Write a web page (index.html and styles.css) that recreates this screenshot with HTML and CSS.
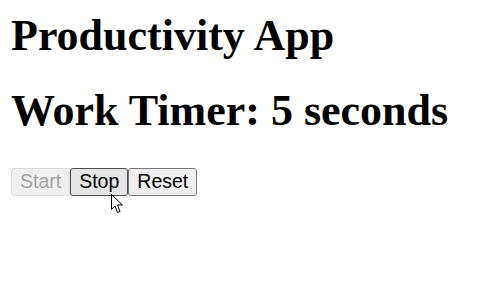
FILE: index.html
```html
<!DOCTYPE html>
<html lang="en">
<head>
    <meta charset="UTF-8">
    <title>Productivity App</title>
    <link rel="stylesheet" href="styles.css">
</head>
<body>

<h1>Productivity App</h1>
<h1 id="timer">Work Timer: 5 seconds</h1>

<div class="controls">
    <button id="start" disabled>Start</button><button id="stop" class="pressed">Stop</button><button id="reset">Reset</button>
</div>

<div class="cursor">
    <svg width="14" height="22" viewBox="0 0 14 22">
        <polygon points="1.5,1.5 1.5,16.5 5,13 7.5,19.5 10,18.5 7.5,12 12.5,12" fill="white" stroke="black" stroke-width="1"/>
    </svg>
</div>

</body>
</html>
```

FILE: styles.css
```css
body {
    margin: 11px;
    font-family: 'Liberation Serif', 'Times New Roman', serif;
    color: #000;
    background-color: #fff;
}

h1 {
    font-size: 44px;
    font-weight: bold;
    margin: 0;
    line-height: 1.15;
}

h1 + h1 {
    margin-top: 24px;
}

.controls {
    margin-top: 32px;
    display: flex;
    align-items: flex-start;
}

button {
    font-family: 'Liberation Sans', Arial, sans-serif;
    font-size: 19.5px;
    padding: 1px 8px 2px;
    height: 28px;
    background-color: #efefef;
    border: 1px solid #767676;
    border-radius: 3px;
    color: #000;
}

button:disabled {
    color: #a3a3a3;
    border-color: #d9d9d9;
    background-color: #f0f0f0;
}

button.pressed {
    background-color: #e5e5e5;
    border-color: #4f4f4f;
}

/* mouse pointer resting over the Stop button */
.cursor {
    position: absolute;
    left: 110px;
    top: 193px;
    width: 14px;
    height: 22px;
    z-index: 2;
}

.cursor svg {
    display: block;
}
```
